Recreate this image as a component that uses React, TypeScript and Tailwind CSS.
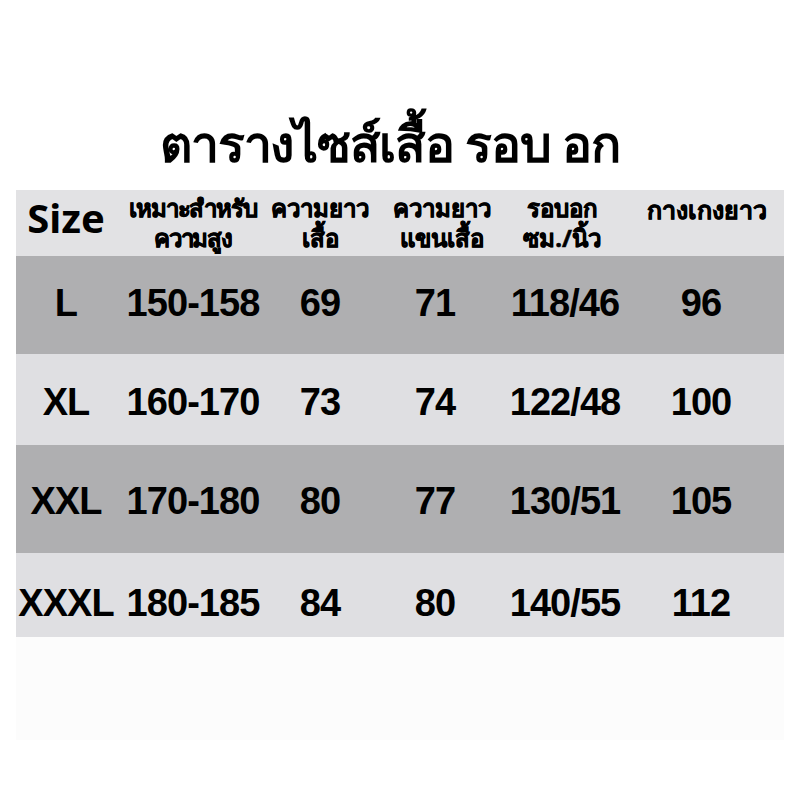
import React from "react";

const rows = [
  { size: "L", h: "150-158", len: "69", sleeve: "71", chest: "118/46", pants: "96", bg: "bg-[#afafb1]", cls: "h-[98px] pb-[4px]" },
  { size: "XL", h: "160-170", len: "73", sleeve: "74", chest: "122/48", pants: "100", bg: "bg-[#dfdfe2]", cls: "h-[91px] pt-[4px]" },
  { size: "XXL", h: "170-180", len: "80", sleeve: "77", chest: "130/51", pants: "105", bg: "bg-[#afafb1]", cls: "h-[108px] pt-[4px]" },
  { size: "XXXL", h: "180-185", len: "84", sleeve: "80", chest: "140/55", pants: "112", bg: "bg-[#dfdfe2]", cls: "h-[84px] pt-[16px]" },
];

const cols = "grid grid-cols-[100px_154px_100px_130px_130px_154px] items-center";

export default function App() {
  return (
    <div
      className="w-[800px] h-[800px] bg-white text-black overflow-hidden"
      style={{ fontFamily: '"Noto Sans", "Liberation Sans", sans-serif' }}
    >
      {/* Title */}
      <div className="pt-[108px] h-[190px] text-center">
        <h1 className="text-[50px] font-bold leading-[70px] tracking-tight pr-[20px]">ตารางไซส์เสื้อ รอบ อก</h1>
      </div>

      <div className="mx-4">
        {/* Header */}
        <div className={`${cols} h-[66px] bg-[#e2e2e4] font-bold text-center`}>
          <div className="text-[40px] leading-none pb-[10px]">Size</div>
          <div className="text-[24px] leading-[30px] tracking-tighter [-webkit-text-stroke:0.6px_black]">เหมาะสำหรับ<br />ความสูง</div>
          <div className="text-[24px] leading-[30px] [-webkit-text-stroke:0.6px_black]">ความยาว<br />เสื้อ</div>
          <div className="text-[24px] leading-[30px] pl-[14px] [-webkit-text-stroke:0.6px_black]">ความยาว<br />แขนเสื้อ</div>
          <div className="text-[24px] leading-[30px] pr-[6px] [-webkit-text-stroke:0.6px_black]">รอบอก<br />ซม./นิ้ว</div>
          <div className="text-[25px] leading-[30px] self-start pt-[4px] [-webkit-text-stroke:0.6px_black]">กางเกงยาว</div>
        </div>

        {/* Rows */}
        {rows.map((r) => (
          <div
            key={r.size}
            className={`${cols} ${r.bg} ${r.cls} font-bold text-[38px] leading-none text-center tracking-tight`}
            style={{ fontFamily: '"Liberation Sans", sans-serif' }}
          >
            <div>{r.size}</div>
            <div>{r.h}</div>
            <div>{r.len}</div>
            <div>{r.sleeve}</div>
            <div>{r.chest}</div>
            <div className="pr-[12px]">{r.pants}</div>
          </div>
        ))}

        <div className="h-[103px] bg-[#fcfcfc]" />
      </div>
    </div>
  );
}
